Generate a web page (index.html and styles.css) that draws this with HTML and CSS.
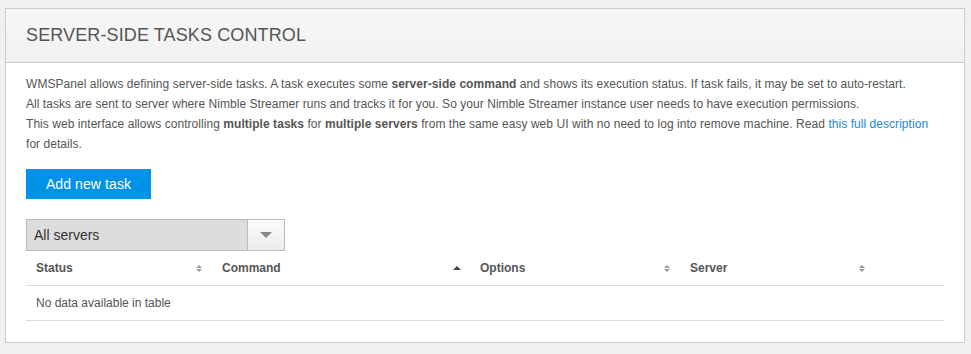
FILE: index.html
```html
<!DOCTYPE html>
<html>
<head>
<meta charset="utf-8">
<link rel="stylesheet" href="styles.css">
</head>
<body>
<div class="panel">
  <div class="panel-head">
    <h1 class="panel-title">SERVER-SIDE TASKS CONTROL</h1>
  </div>
  <div class="panel-body">
    <p class="intro">WMSPanel allows defining server-side tasks. A task executes some <b>server-side command</b> and shows its execution status. If task fails, it may be set to auto-restart.<br>All tasks are sent to server where Nimble Streamer runs and tracks it for you. So your Nimble Streamer instance user needs to have execution permissions.<br>This web interface allows controlling <b>multiple tasks</b> for <b>multiple servers</b> from the same easy web UI with no need to log into remove machine. Read <a href="#" class="link">this full description</a><br>for details.</p>
    <button class="btn-primary">Add new task</button>
    <div class="select">
      <span class="select-label">All servers</span>
      <span class="select-arrow"><span class="caret"></span></span>
    </div>
    <table class="tasks">
      <thead>
        <tr>
          <th class="c-status"><span>Status</span><span class="sort both"></span></th>
          <th class="c-command"><span>Command</span><span class="sort asc"></span></th>
          <th class="c-options"><span>Options</span><span class="sort both"></span></th>
          <th class="c-server"><span>Server</span><span class="sort both"></span></th>
          <th class="c-actions"></th>
        </tr>
      </thead>
      <tbody>
        <tr><td colspan="5" class="empty">No data available in table</td></tr>
      </tbody>
    </table>
  </div>
</div>
</body>
</html>
```
FILE: styles.css
```css
html, body {
  margin: 0;
  padding: 0;
  background: #f0f0f0;
}
body {
  padding: 8px 6px 12px 5px;
  font-family: "Liberation Sans", Arial, sans-serif;
  color: #555;
}
.panel {
  background: #fff;
  border: 1px solid #ccc;
}
.panel-head {
  height: 53px;
  display: flex;
  align-items: center;
  padding: 0 20px;
  background: linear-gradient(#f7f7f7, #f1f1f1);
  border-bottom: 1px solid #ccc;
}
.panel-title {
  margin: 0;
  font-size: 18px;
  font-weight: normal;
  letter-spacing: 0.12px;
  color: #555;
}
.panel-body {
  padding: 11px 20px 21px 20px;
}
.intro {
  margin: 0;
  font-size: 12px;
  line-height: 20px;
  letter-spacing: 0.05px;
}
.intro b {
  font-weight: bold;
}
.link {
  color: #1a8ad6;
  text-decoration: none;
}
.btn-primary {
  display: block;
  margin-top: 15px;
  width: 125px;
  height: 30px;
  border: 0;
  background: #0092e6;
  color: #fff;
  font-family: "Liberation Sans", Arial, sans-serif;
  font-size: 14px;
  letter-spacing: 0.1px;
  padding: 0;
  cursor: pointer;
}
.select {
  margin-top: 20px;
  width: 257px;
  height: 30px;
  border: 1px solid #bbb;
  background: #ddd;
  display: flex;
  align-items: center;
}
.select-label {
  flex: 1;
  padding-left: 7px;
  font-size: 14px;
  color: #333;
}
.select-arrow {
  width: 36px;
  height: 30px;
  border-left: 1px solid #bbb;
  background: linear-gradient(#fafafa, #ececec);
  display: flex;
  align-items: center;
  justify-content: center;
}
.caret {
  width: 0;
  height: 0;
  border-left: 6px solid transparent;
  border-right: 6px solid transparent;
  border-top: 6px solid #888;
}
.tasks {
  width: 100%;
  border-collapse: collapse;
  font-size: 12px;
}
.tasks th {
  position: relative;
  height: 34px;
  padding: 0 10px;
  text-align: left;
  font-weight: bold;
  color: #555;
  border-bottom: 1px solid #ddd;
}
.c-status { width: 166px; }
.c-command { width: 238px; }
.c-options { width: 190px; }
.c-server { width: 175px; }
.sort {
  position: absolute;
  right: 10px;
  top: 50%;
  width: 6px;
  height: 8px;
  margin-top: -3px;
}
.sort.both::before,
.sort.both::after,
.sort.asc::before {
  content: "";
  position: absolute;
  left: 0;
  width: 0;
  height: 0;
  border-left: 3px solid transparent;
  border-right: 3px solid transparent;
}
.sort.both::before {
  top: 0;
  border-bottom: 3px solid #999;
}
.sort.both::after {
  top: 4px;
  border-top: 3px solid #999;
}
.sort.asc::before {
  top: 1px;
  left: -1px;
  border-left-width: 4px;
  border-right-width: 4px;
  border-bottom: 4px solid #444;
}
.tasks td.empty {
  height: 34px;
  padding: 0 10px;
  color: #555;
  border-bottom: 1px solid #ddd;
}
```
